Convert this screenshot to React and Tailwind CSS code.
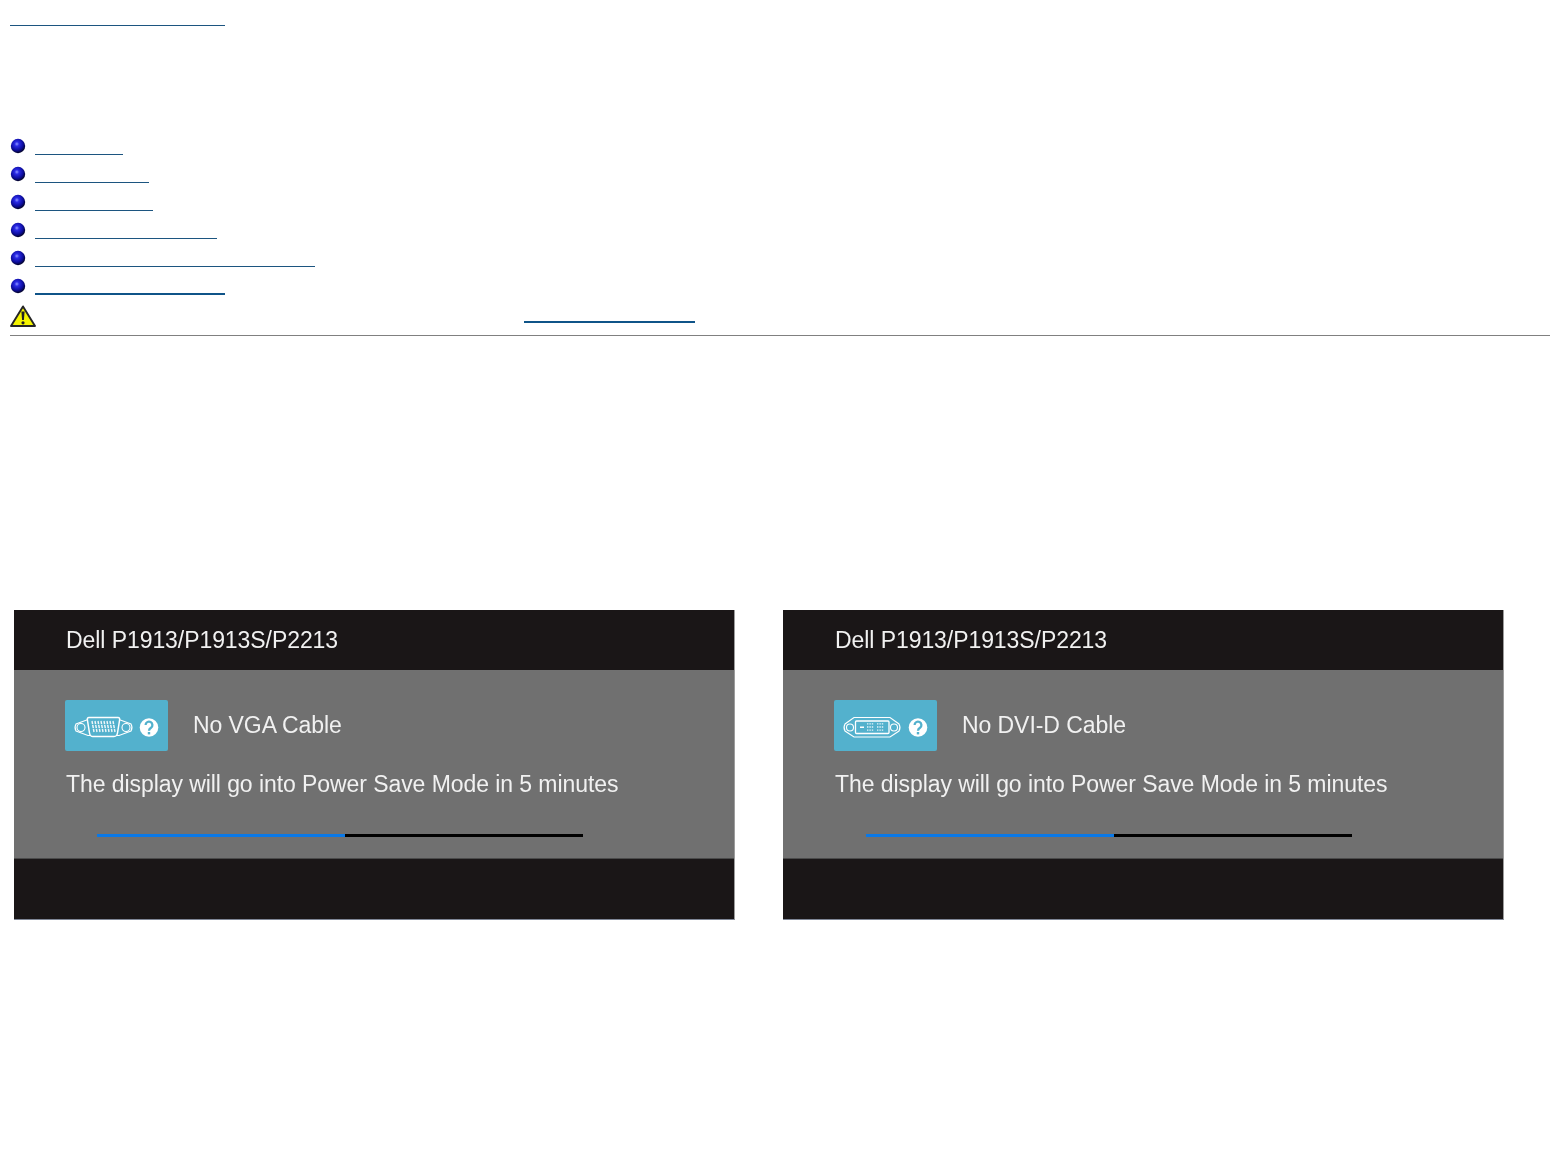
function Bullet({ id }) {
  return (
    <svg width="16" height="16" viewBox="0 0 16 16" className="block shrink-0">
      <defs>
        <radialGradient id={id} cx="0.42" cy="0.36" r="0.62">
          <stop offset="0" stopColor="#8f96ff" />
          <stop offset="0.25" stopColor="#2a2ae6" />
          <stop offset="0.7" stopColor="#0c0c9c" />
          <stop offset="1" stopColor="#04042e" />
        </radialGradient>
      </defs>
      <circle cx="8" cy="8" r="7.2" fill={`url(#${id})`} />
    </svg>
  );
}

function WarningIcon() {
  return (
    <svg width="26" height="22" viewBox="0 0 26 22" className="block">
      <path d="M13 1.4 L25 21 H1 Z" fill="#f4f400" stroke="#262626" strokeWidth="1.9" strokeLinejoin="round" />
      <path d="M11.4 6.5 H14.6 L13.9 15 H12.1 Z" fill="#222" />
      <circle cx="13" cy="17.8" r="1.6" fill="#222" />
    </svg>
  );
}

function QuestionMark({ cx }) {
  return (
    <g>
      <circle cx={cx} cy="27.5" r="9.3" fill="#fff" />
      <path
        d={`M${cx - 3.4} 25 a3.4 3.4 0 1 1 5.4 2.8 c-1.3 .9 -2 1.4 -2 3`}
        fill="none"
        stroke="#53b1cd"
        strokeWidth="2.3"
      />
      <rect x={cx - 1.2} y="32" width="2.4" height="2.4" fill="#53b1cd" />
    </g>
  );
}

function VgaIcon() {
  return (
    <svg width="103" height="51" viewBox="0 0 103 51" className="block">
      <g fill="none" stroke="#fff" strokeWidth="1.1">
        <path d="M23 19.5 H54 L66 24 Q68 27.5 66 31 L54 35.5 H23 L11 31 Q9 27.5 11 24 Z" />
        <circle cx="16" cy="27.5" r="4" />
        <circle cx="61" cy="27.5" r="4" />
        <path d="M24 17.5 H53 Q55 17.5 54.6 20 L52.5 33 Q52 36.5 49 36.5 H28 Q25 36.5 24.5 33 L22.4 20 Q22 17.5 24 17.5 Z" fill="#53b1cd" strokeWidth="1.5" />
      </g>
      <path
        d="M27 21 L29 32 M30 21 L32 32 M33 21 L35 32 M36 21 L38 32 M39 21 L41 32 M42 21 L44 32 M45 21 L47 32 M48 21 L50 32"
        stroke="#fff"
        strokeWidth="1.4"
        opacity="0.9"
      />
      <path d="M26 24.5 H52 M26 28.5 H52" stroke="#53b1cd" strokeWidth="0.8" />
      <QuestionMark cx={84} />
    </svg>
  );
}

function DviIcon() {
  return (
    <svg width="103" height="51" viewBox="0 0 103 51" className="block">
      <g fill="none" stroke="#fff" strokeWidth="1.1">
        <path d="M20 17.5 H56 L65 24 Q67 27.5 65 31 L56 37 H20 L11 31 Q9 27.5 11 24 Z" />
        <circle cx="16" cy="27.5" r="3.5" />
        <circle cx="60" cy="27.5" r="3.5" />
        <rect x="21.5" y="21" width="33.5" height="12.5" rx="1" fill="#53b1cd" strokeWidth="1.3" />
      </g>
      <rect x="26" y="26.5" width="4" height="1.5" fill="#fff" />
      <g stroke="#fff" strokeWidth="1.3" strokeDasharray="1.4 1" opacity="0.85">
        <path d="M33 23.8 H40 M33 27 H40 M33 30.2 H40" />
        <path d="M43 23.8 H50 M43 27 H50 M43 30.2 H50" />
      </g>
      <QuestionMark cx={84} />
    </svg>
  );
}

function CablePanel({ label, icon }) {
  return (
    <div
      className="w-[721px] border-r border-r-[#9c9c9c] border-b border-b-[#7f8696] text-[#f1f1f1] tracking-[-0.07px]"
      style={{ fontFamily: '"Liberation Sans", Arial, sans-serif' }}
    >
      <div className="h-[60px] bg-[#1a1617] pl-[52px] flex items-center">
        <span className="text-[23px] blur-[0.4px]">Dell P1913/P1913S/P2213</span>
      </div>
      <div className="h-[189px] bg-[#707070] pt-[30px] border-b border-[#4a4a4a]">
        <div className="flex items-center pl-[51px]">
          <div className="w-[103px] h-[51px] bg-[#53b1cd] rounded-[2px]">{icon}</div>
          <span className="ml-[25px] text-[23px] blur-[0.4px]">{label}</span>
        </div>
        <p className="mt-[18px] pl-[52px] text-[23px] leading-[30px] blur-[0.4px]">
          The display will go into Power Save Mode in 5 minutes
        </p>
        <div className="mt-[35px] ml-[83px] w-[486px] h-[3px] flex">
          <div className="w-[248px] bg-[#0a78e6]" />
          <div className="flex-1 bg-black" />
        </div>
      </div>
      <div className="h-[60px] bg-[#1a1617]" />
    </div>
  );
}

const links = [
  { w: "w-[88px]", id: "b1" },
  { w: "w-[114px]", id: "b2" },
  { w: "w-[118px]", id: "b3" },
  { w: "w-[182px]", id: "b4" },
  { w: "w-[280px]", id: "b5" },
];

export default function App() {
  return (
    <div className="min-h-[1150px] bg-white px-[10px]">
      <a className="block h-[26px] w-[215px] border-b border-[#1c5580]" />

      <ul className="mt-[106px]">
        {links.map((l) => (
          <li key={l.id} className="h-[28px] flex">
            <div className="mt-[6px]">
              <Bullet id={l.id} />
            </div>
            <a className={`block h-[23px] ml-[9px] border-b border-[#1c5580] ${l.w}`} />
          </li>
        ))}
        <li className="h-[28px] flex">
          <div className="mt-[6px]">
            <Bullet id="b6" />
          </div>
          <a className="block h-[23px] ml-[9px] w-[190px] border-b-2 border-[#0f5488]" />
        </li>
      </ul>

      <div className="h-[35px] flex">
        <div className="mt-[5px]">
          <WarningIcon />
        </div>
        <a className="block h-[23px] ml-[488px] w-[171px] border-b-2 border-[#0f5488]" />
      </div>
      <hr className="border-0 h-px bg-[#808080]" />

      <div className="mt-[274px] ml-[4px] flex gap-[48px]">
        <CablePanel label="No VGA Cable" icon={<VgaIcon />} />
        <CablePanel label="No DVI-D Cable" icon={<DviIcon />} />
      </div>
    </div>
  );
}
